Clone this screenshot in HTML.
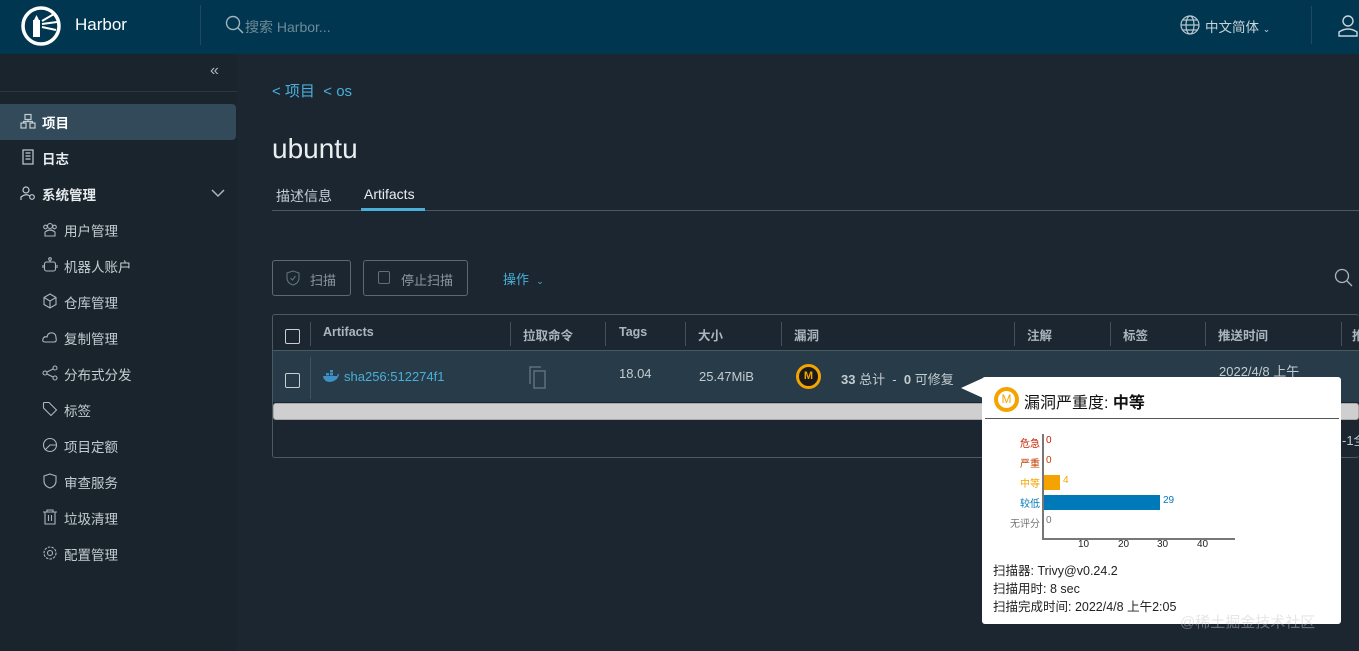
<!DOCTYPE html>
<html><head><meta charset="utf-8"><style>
*{box-sizing:border-box;margin:0;padding:0}
body{width:1359px;height:651px;overflow:hidden;background:#1c2631;font-family:"Liberation Sans","Noto Sans CJK SC",sans-serif;color:#c6ced3;position:relative;font-size:13px}
.hdr{position:absolute;left:0;top:0;width:1359px;height:54px;background:#00364f}
.abs{position:absolute;white-space:nowrap}
.side{position:absolute;left:0;top:54px;width:237px;height:597px;background:#1a242c}
.mi{position:absolute;left:64px;font-size:13.5px;color:#c3ccd1}
.mi svg{position:absolute;left:-22px;top:1px}
.th{position:absolute;top:325px;font-size:12.5px;font-weight:bold;color:#aab6bd}
.sep{position:absolute;top:322px;width:1px;height:24px;background:#3f525d}
.cb{position:absolute;width:15px;height:15px;border:1.5px solid #c7d0d5;border-radius:2px}
</style></head><body>
<div class="hdr">
<svg class="abs" style="left:20px;top:5px" width="42" height="42" viewBox="0 0 42 42"><circle cx="21" cy="21" r="18" fill="none" stroke="#fff" stroke-width="3.5"/><rect x="13" y="15" width="7" height="17" fill="#fff"/><path d="M14 15 L16.5 10 L19 15Z" fill="#fff"/><path d="M22 16 L34 9 M22 19 L37 17 M22 22 L36 25" stroke="#fff" stroke-width="2"/></svg>
<div class="abs" style="left:75px;top:15px;font-size:17px;color:#fff">Harbor</div>
<div class="abs" style="left:200px;top:5px;width:1px;height:40px;background:#1f4a60"></div>
<svg class="abs" style="left:225px;top:15px" width="20" height="20"><circle cx="8" cy="8" r="6.5" fill="none" stroke="#9fb4bf" stroke-width="1.4"/><path d="M13 13 L18 18" stroke="#9fb4bf" stroke-width="1.5"/></svg>
<div class="abs" style="left:245px;top:17px;font-size:14px;color:#6f8a98">搜索 Harbor...</div>
<svg class="abs" style="left:1180px;top:15px" width="20" height="20"><g fill="none" stroke="#b8c7cf" stroke-width="1.2"><circle cx="10" cy="10" r="9"/><ellipse cx="10" cy="10" rx="4" ry="9"/><path d="M1 10H19M3 5H17M3 15H17"/></g></svg>
<div class="abs" style="left:1205px;top:16px;font-size:13.5px;color:#c8d4da">中文简体 <span style="font-size:9px">⌄</span></div>
<div class="abs" style="left:1311px;top:6px;width:1px;height:38px;background:#1f4a60"></div>
<svg class="abs" style="left:1337px;top:14px" width="22" height="24"><g fill="none" stroke="#c8d4da" stroke-width="1.4"><circle cx="11" cy="7" r="5"/><path d="M2 22 V18 Q11 12 20 18 V22Z"/></g></svg>
</div>
<div class="side">
<div class="abs" style="left:210px;top:8px;font-size:16px;color:#aab6bd">«</div>
<div class="abs" style="left:0;top:37px;width:237px;height:1px;background:#2b3740"></div>
<div class="abs" style="left:0;top:50px;width:236px;height:36px;background:#324a5a;border-radius:0 4px 4px 0"></div>
</div>
<div class="mi" style="left:42px;top:112px;color:#fff;font-weight:bold"><svg width="16" height="16" style="left:-22px"><g fill="none" stroke="#c3ccd1" stroke-width="1.2"><rect x="5" y="1.5" width="6" height="5"/><rect x="1" y="10" width="5" height="5"/><rect x="10" y="10" width="5" height="5"/><path d="M8 6.5V8.5H3.5V10M8 8.5H12.5V10"/></g></svg>项目</div>
<div class="mi" style="left:42px;top:148px;color:#e6ebee;font-weight:bold"><svg width="16" height="16" style="left:-22px"><g fill="none" stroke="#c3ccd1" stroke-width="1.2"><rect x="3" y="1" width="10" height="14"/><path d="M5.5 4H10.5M5.5 7H10.5M5.5 10H10.5"/></g></svg>日志</div>
<div class="mi" style="left:42px;top:184px;color:#e6ebee;font-weight:bold"><svg width="16" height="16" style="left:-22px"><g fill="none" stroke="#c3ccd1" stroke-width="1.2"><circle cx="6" cy="5" r="3"/><path d="M1 15V12Q6 8 10 11"/><circle cx="12" cy="12" r="2.3"/></g></svg>系统管理</div>
<svg class="abs" style="left:211px;top:188px" width="14" height="10"><path d="M1 2L7 8L13 2" fill="none" stroke="#aab6bd" stroke-width="1.5"/></svg>
<div class="mi" style="top:220px"><svg width="16" height="16"><g fill="none" stroke="#aab6bd" stroke-width="1.1"><circle cx="8" cy="5" r="2.5"/><circle cx="3.5" cy="6" r="1.8"/><circle cx="12.5" cy="6" r="1.8"/><path d="M3 15V11Q8 7 13 11V15Z"/></g></svg>用户管理</div>
<div class="mi" style="top:256px"><svg width="16" height="16"><g fill="none" stroke="#aab6bd" stroke-width="1.1"><rect x="2.5" y="5" width="11" height="9" rx="2"/><circle cx="8" cy="2" r="1.3"/><path d="M8 3.3V5M1 8V11M15 8V11"/></g></svg>机器人账户</div>
<div class="mi" style="top:292px"><svg width="16" height="16"><g fill="none" stroke="#aab6bd" stroke-width="1.1"><path d="M8 1L14 4.5V11.5L8 15L2 11.5V4.5Z M2 4.5L8 8L14 4.5M8 8V15"/></g></svg>仓库管理</div>
<div class="mi" style="top:328px"><svg width="16" height="16"><g fill="none" stroke="#aab6bd" stroke-width="1.1"><path d="M3 13Q0 13 1 10Q2 7 5 8Q6 3 11 4Q14 5 14 9Q15 13 12 13Z"/></g></svg>复制管理</div>
<div class="mi" style="top:364px"><svg width="16" height="16"><g fill="none" stroke="#aab6bd" stroke-width="1.1"><circle cx="3" cy="8" r="2"/><circle cx="13" cy="3" r="2"/><circle cx="13" cy="13" r="2"/><path d="M5 7L11 4M5 9L11 12"/></g></svg>分布式分发</div>
<div class="mi" style="top:400px"><svg width="16" height="16"><g fill="none" stroke="#aab6bd" stroke-width="1.1"><path d="M1.5 2V7L9 14.5L14.5 9L7 1.5H2Z"/></g></svg>标签</div>
<div class="mi" style="top:436px"><svg width="16" height="16"><g fill="none" stroke="#aab6bd" stroke-width="1.1"><circle cx="8" cy="8" r="6.5"/><path d="M3 13L8 8L14.5 8"/></g></svg>项目定额</div>
<div class="mi" style="top:472px"><svg width="16" height="16"><g fill="none" stroke="#aab6bd" stroke-width="1.1"><path d="M8 1L14 3V8Q14 13 8 15Q2 13 2 8V3Z"/></g></svg>审查服务</div>
<div class="mi" style="top:508px"><svg width="16" height="16"><g fill="none" stroke="#aab6bd" stroke-width="1.1"><path d="M1 3H15M5 3V1H11V3M3 3V15H13V3M6.5 6V12M9.5 6V12"/></g></svg>垃圾清理</div>
<div class="mi" style="top:544px"><svg width="16" height="16"><g fill="none" stroke="#aab6bd" stroke-width="1.1"><circle cx="8" cy="8" r="2.5"/><circle cx="8" cy="8" r="6" stroke-dasharray="2.5 1.2"/></g></svg>配置管理</div>

<div class="abs" style="left:272px;top:80px;font-size:15px;color:#49afd9">&lt; 项目 &nbsp;&lt; os</div>
<div class="abs" style="left:272px;top:133px;font-size:28px;color:#e9eef0">ubuntu</div>
<div class="abs" style="left:276px;top:186px;font-size:14px;color:#c3ccd1">描述信息</div>
<div class="abs" style="left:364px;top:186px;font-size:14px;color:#e9eef0">Artifacts</div>
<div class="abs" style="left:272px;top:210px;width:1087px;height:1px;background:#4a5962"></div>
<div class="abs" style="left:361px;top:208px;width:64px;height:3px;background:#49afd9"></div>

<div class="abs" style="left:272px;top:260px;width:79px;height:36px;border:1px solid #5a6a73;border-radius:3px"></div>
<svg class="abs" style="left:286px;top:270px" width="14" height="16"><path d="M7 1L13 3V8Q13 13 7 15Q1 13 1 8V3Z M4.5 8L6.5 10L9.5 6" fill="none" stroke="#5f7079" stroke-width="1.1"/></svg>
<div class="abs" style="left:310px;top:270px;font-size:13px;color:#8a979e">扫描</div>
<div class="abs" style="left:363px;top:260px;width:105px;height:36px;border:1px solid #5a6a73;border-radius:3px"></div>
<div class="abs" style="left:378px;top:271px;width:12px;height:13px;border:1px solid #5f7079;border-radius:2px"></div>
<div class="abs" style="left:401px;top:270px;font-size:13px;color:#8a979e">停止扫描</div>
<div class="abs" style="left:503px;top:269px;font-size:13px;color:#49afd9">操作 &nbsp;<span style="font-size:9px">⌄</span></div>
<svg class="abs" style="left:1334px;top:268px" width="22" height="22"><circle cx="8" cy="8" r="6.5" fill="none" stroke="#aab6bd" stroke-width="1.3"/><path d="M13 13L18 18" stroke="#aab6bd" stroke-width="1.3"/></svg>

<div class="abs" style="left:272px;top:314px;width:1087px;height:144px;border:1px solid #4a5962;border-radius:3px;border-right:none"></div>
<div class="abs" style="left:273px;top:350px;width:1086px;height:1px;background:#4a5962"></div>
<div class="abs" style="left:273px;top:351px;width:1086px;height:51px;background:#273c48"></div>
<div class="abs" style="left:273px;top:403px;width:1086px;height:17px;background:#cfcfcf;border:1px solid #aaa;border-radius:3px"></div>
<div class="cb" style="left:285px;top:329px"></div>
<div class="cb" style="left:285px;top:373px"></div>
<div class="sep" style="left:310px"></div><div class="sep" style="left:510px"></div><div class="sep" style="left:605px"></div><div class="sep" style="left:685px"></div><div class="sep" style="left:781px"></div><div class="sep" style="left:1014px"></div><div class="sep" style="left:1110px"></div><div class="sep" style="left:1205px"></div><div class="sep" style="left:1341px"></div>
<div class="abs" style="left:310px;top:357px;width:1px;height:42px;background:#3f525d"></div>
<div class="th" style="left:323px">Artifacts</div><div class="th" style="left:523px">拉取命令</div><div class="th" style="left:619px">Tags</div><div class="th" style="left:698px">大小</div><div class="th" style="left:794px">漏洞</div><div class="th" style="left:1027px">注解</div><div class="th" style="left:1123px">标签</div><div class="th" style="left:1218px">推送时间</div><div class="th" style="left:1352px">推</div>
<svg class="abs" style="left:322px;top:369px" width="18" height="14"><path d="M1 7H15Q16 4 17 5Q16 12 8 13Q2 13 1 7Z" fill="#3d8fc4"/><rect x="4" y="4" width="3" height="2.5" fill="#3d8fc4"/><rect x="8" y="4" width="3" height="2.5" fill="#3d8fc4"/><rect x="8" y="1" width="3" height="2.5" fill="#3d8fc4"/></svg>
<div class="abs" style="left:344px;top:369px;font-size:13px;color:#49afd9">sha256:512274f1</div>
<svg class="abs" style="left:527px;top:365px" width="22" height="24"><g fill="none" stroke="#5f7079" stroke-width="1.5"><path d="M3 19V2H14"/><rect x="7" y="6" width="11" height="17"/></g></svg>
<div class="abs" style="left:619px;top:366px;font-size:13px;color:#c3ccd1">18.04</div>
<div class="abs" style="left:699px;top:369px;font-size:13px;color:#c3ccd1">25.47MiB</div>
<div class="abs" style="left:796px;top:364px;width:25px;height:25px;border:3px solid #f4a300;border-radius:50%;background:#1a1a1a;color:#f4a300;font-size:11px;font-weight:bold;text-align:center;line-height:19px">M</div>
<div class="abs" style="left:841px;top:369px;font-size:13px;color:#c3ccd1"><b>33</b> 总计 &nbsp;- &nbsp;<b>0</b> 可修复</div>
<div class="abs" style="left:1219px;top:361px;font-size:13px;color:#c3ccd1">2022/4/8 上午</div>
<div class="abs" style="left:1342px;top:430px;font-size:13px;color:#c3ccd1">-1全</div>

<div class="abs" style="left:961px;top:378px;width:0;height:0;border-top:10px solid transparent;border-bottom:10px solid transparent;border-right:22px solid #fff"></div>
<div class="abs" style="left:982px;top:377px;width:359px;height:247px;background:#fff;border-radius:3px;color:#222">
<div class="abs" style="left:12px;top:10px;width:25px;height:25px;border:4px solid #f4a300;border-radius:50%;color:#f4a300;font-size:12px;text-align:center;line-height:17px">M</div>
<div class="abs" style="left:42px;top:12px;font-size:16px;color:#111">漏洞严重度: <b>中等</b></div>
<div class="abs" style="left:3px;top:41px;width:354px;height:1px;background:#555"></div>
<div class="abs" style="left:60px;top:57px;width:2px;height:106px;background:#777"></div>
<div class="abs" style="left:60px;top:161px;width:193px;height:2px;background:#777"></div>
<div class="abs" style="left:62px;top:98px;width:16px;height:15px;background:#f4a300"></div>
<div class="abs" style="left:62px;top:118px;width:116px;height:15px;background:#0079b8"></div>
<div class="abs" style="font-size:10px;left:38px;top:58px;color:#c21d00">危急</div><div class="abs" style="font-size:10px;left:64px;top:58px;color:#c21d00">0</div>
<div class="abs" style="font-size:10px;left:38px;top:78px;color:#c23c00">严重</div><div class="abs" style="font-size:10px;left:64px;top:78px;color:#c23c00">0</div>
<div class="abs" style="font-size:10px;left:38px;top:98px;color:#f4a300">中等</div><div class="abs" style="font-size:10px;left:81px;top:98px;color:#f4a300">4</div>
<div class="abs" style="font-size:10px;left:38px;top:118px;color:#0079b8">较低</div><div class="abs" style="font-size:10px;left:181px;top:118px;color:#0079b8">29</div>
<div class="abs" style="font-size:10px;left:28px;top:138px;color:#777">无评分</div><div class="abs" style="font-size:10px;left:64px;top:138px;color:#777">0</div>
<div class="abs" style="font-size:10px;left:96px;top:162px">10</div><div class="abs" style="font-size:10px;left:136px;top:162px">20</div><div class="abs" style="font-size:10px;left:175px;top:162px">30</div><div class="abs" style="font-size:10px;left:215px;top:162px">40</div>
<div class="abs" style="left:11px;top:185px;font-size:12.5px;line-height:18px">扫描器: Trivy@v0.24.2<br>扫描用时: 8 sec<br>扫描完成时间: 2022/4/8 上午2:05</div>
</div>
<div class="abs" style="left:1180px;top:611px;font-size:15px;color:rgba(200,200,200,0.45)">@稀土掘金技术社区</div>
</body></html>
